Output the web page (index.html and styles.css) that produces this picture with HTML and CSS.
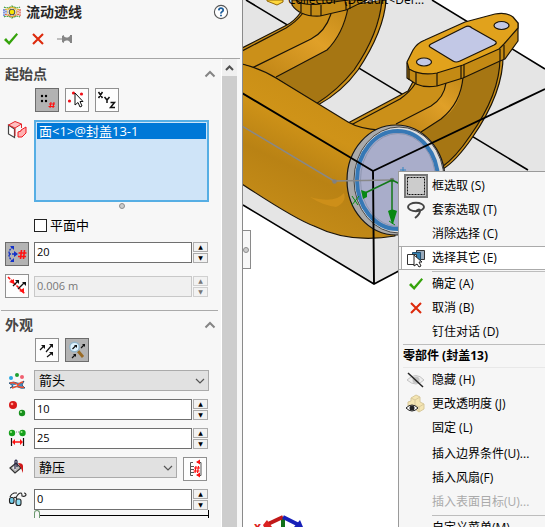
FILE: index.html
```html
<!DOCTYPE html>
<html lang="zh-CN">
<head>
<meta charset="utf-8">
<title>流动迹线</title>
<link rel="stylesheet" href="styles.css">
</head>
<body>
<main class="app">
  <form class="panel">
    <header class="panel-head">
      <div class="title-row">
        <svg class="title-icon" width="18" height="16" viewBox="0 0 18 16" fill="none" stroke-width="1.1" stroke-dasharray="2 .6">
          <path d="M1 3q3 2 8-1q5 3 8 1" stroke="#3f9a35"/><path d="M2 5.500q3 0 7-2.500q4 2.500 7 2.500" stroke="#e0b020"/>
          <path d="M1 13q3-2 8 1q5-3 8-1" stroke="#3f9a35"/><path d="M2 10.500q3 0 7 2.500q4-2.500 7-2.500" stroke="#e06030"/>
          <path d="M1 5v7M3 6.500v3" stroke="#2448c8"/><path d="M17 5v7M15 6.500v3" stroke="#d83a2a"/>
          <circle cx="9" cy="8" r="4.600" stroke="#e0b020" stroke-width=".9"/>
          <circle cx="9" cy="8" r="2.800" fill="#f7e500" stroke="#555" stroke-dasharray="none"/>
        </svg>
        <h1>流动迹线</h1>
        <button type="button" class="plain help" aria-label="帮助">
          <svg width="16" height="16" viewBox="0 0 16 16" fill="none"><circle cx="8" cy="8" r="6.600" fill="#fff" stroke="#555" stroke-width="1.100"/><path d="M5.800 6.300Q6 4.200 8 4.200T10.200 6Q10.200 7 9 7.700T8 9.600M8 10.700v1.600" stroke="#1f5f9c" stroke-width="1.800"/></svg>
        </button>
      </div>
      <div class="action-row">
        <button type="button" class="plain" aria-label="确定"><svg width="16" height="14" viewBox="0 0 16 14"><path d="M1 8L3 6l3 3.500L13.500 1 15 2.500 6.200 13z" fill="#35a30b"/></svg></button>
        <button type="button" class="plain" aria-label="取消"><svg width="12" height="12" viewBox="0 0 12 12"><path d="M1 1l10 10M11 1L1 11" stroke="#dd2a0c" stroke-width="2.100"/></svg></button>
        <button type="button" class="plain" aria-label="保持可见"><svg width="16" height="12" viewBox="0 0 16 12"><path d="M0 5.500h5V3l2-1v1.500l2 1h2L13 3V2h2v8h-2V9l-2-1.500H9l-2 1V10L5 9V6.500H0z" fill="#858585"/></svg></button>
      </div>
    </header>

    <div class="panel-body">
      <div class="sections">
        <section class="section">
          <h2>起始点
            <svg class="collapse" width="12" height="8" viewBox="0 0 12 8"><path d="M1.500 6.500L6 2l4.500 4.500" fill="none" stroke="#858585" stroke-width="2"/></svg>
          </h2>
          <div class="tools">
            <button type="button" class="tool on" aria-label="阵列"><svg width="22" height="22" viewBox="0 0 22 22"><g fill="#000"><circle cx="6" cy="7" r="1.200"/><circle cx="10" cy="7" r="1.200"/><circle cx="6" cy="12" r="1.200"/><circle cx="10" cy="12" r="1.200"/></g><path d="M15 13l-1 6M18 13l-1 6M13 15h6M12.500 17.500h6" stroke="#f11" stroke-width="1.100"/></svg></button>
            <button type="button" class="tool" aria-label="选取点"><svg width="22" height="22" viewBox="0 0 22 22"><g fill="#f01018"><circle cx="7.500" cy="4" r="1.600"/><circle cx="15.500" cy="5" r="1.600"/><circle cx="3.500" cy="12" r="1.600"/></g><path d="M9 4v12l3-2.500 2 4.500 2-1-2-4.500h3z" fill="#fff" stroke="#111"/></svg></button>
            <button type="button" class="tool" aria-label="坐标"><svg width="22" height="22" viewBox="0 0 22 22" fill="none" stroke="#111" stroke-width="1.500"><path d="M2.500 3l4 6M6.500 3l-4 6M8.500 8l2.500 3 2.500-3M11 11v3M14.500 13.500h4l-4 5h4.500"/></svg></button>
          </div>
          <div class="field">
            <svg class="icon" width="20" height="20" viewBox="0 0 20 20"><path d="M1.500 5v9l6 3.500V9z" fill="#fff" stroke="#444" stroke-width="1.200"/><path d="M1.500 5L8 1.500 14.500 4 8 8z" fill="#ffc0c0" stroke="#e5252a"/><path d="M8 8v8M14.500 4v4" stroke="#e5252a"/><path d="M11 12l3-1v-1l5-3v6l-4 4h-4z" fill="#ffb0b0" stroke="#f01820"/></svg>
            <div class="picker">
              <ul class="listbox" role="listbox" aria-label="参考"><li role="option" aria-selected="true">面&lt;1&gt;@封盖13-1</li></ul>
              <span class="grip"></span>
            </div>
          </div>
          <label class="check"><input type="checkbox">平面中</label>
          <div class="field">
            <button type="button" class="tool on" aria-label="点数"><svg width="22" height="22" viewBox="0 0 22 22"><path d="M7 4q-4 2-4 7t4 7M3 11h6" fill="none" stroke="#1432c8" stroke-width="1.400" stroke-dasharray="2 1"/><path d="M4 3h4v4zM8 8l4 3-4 3zM8 15v4H4z" fill="#1432c8"/><path d="M15.500 7l-1 9M18.500 7l-1 9M12.500 10h8M12 13.500h8" stroke="#f11" stroke-width="1.600"/></svg></button>
            <div class="spin"><input type="text" value="20" aria-label="点数"><div class="steps"><button type="button" aria-label="增加">▲</button><button type="button" aria-label="减少">▼</button></div></div>
          </div>
          <div class="field center">
            <button type="button" class="tool" aria-label="间距"><svg width="22" height="22" viewBox="0 0 22 22"><path d="M2 2l17 17" stroke="#f11" stroke-width="1.500" stroke-dasharray="3 1"/><path d="M3 7l5-3v5zM13 16l5-3v5z" fill="#f11"/><path d="M7 11l5-5M12 14l6-6" stroke="#111" stroke-width="1.300"/><path d="M9 5h4v4zM16 7h4v4z" fill="#111"/></svg></button>
            <div class="spin disabled"><input type="text" value="0.006 m" disabled aria-label="间距"><div class="steps"><button type="button" disabled aria-label="增加">▲</button><button type="button" disabled aria-label="减少">▼</button></div></div>
          </div>
        </section>

        <section class="section">
          <h2>外观
            <svg class="collapse" width="12" height="8" viewBox="0 0 12 8"><path d="M1.500 6.500L6 2l4.500 4.500" fill="none" stroke="#858585" stroke-width="2"/></svg>
          </h2>
          <div class="tools">
            <button type="button" class="tool" aria-label="静态迹线"><svg width="22" height="22" viewBox="0 0 22 22"><path d="M4 11l4-4M10 13l6-7M11 18l5-4" stroke="#111" stroke-width="1.200"/><path d="M5 6h4v4zM13 5h4v4zM13 13h4v4z" fill="#111"/></svg></button>
            <button type="button" class="tool on" aria-label="动态迹线"><svg width="22" height="22" viewBox="0 0 22 22"><path d="M12 12l5 6" stroke="#9a6b25" stroke-width="2.800"/><circle cx="8.500" cy="8" r="4.800" fill="#dff3ff" stroke="#92b4c8" stroke-width="1.400"/><path d="M6.500 10l3-3M15 9l3-3M6 19l3-3" stroke="#111" stroke-width="1.200"/><path d="M8 6h3v3zM16 5h3v3zM7 15h3v3z" fill="#111"/></svg></button>
          </div>
          <div class="field center">
            <svg class="icon" width="20" height="20" viewBox="0 0 20 20"><circle cx="4" cy="7" r="2" fill="#28a8e0"/><circle cx="10" cy="4" r="2" fill="#20a030"/><circle cx="15" cy="6" r="2" fill="#f06070"/><path d="M2 12q5-2 8 0t7-2l-2 4 3 3q-4 1-7-1t-8 1l3-2z" fill="#3f91cc" stroke="#204870" stroke-width=".8"/><path d="M3 12q6-1 7 2t7 2M5 17q5-1 6-3t5-3" stroke="#f05030" stroke-width="1.500" fill="none"/><path d="M6 15l4-1" stroke="#fff" stroke-width="1.200"/></svg>
            <div class="combo"><select aria-label="迹线形式"><option>箭头</option></select><svg class="caret" width="10" height="6" viewBox="0 0 10 6"><path d="M1 1l4 4 4-4" fill="none" stroke="#555" stroke-width="1.200"/></svg></div>
          </div>
          <div class="field">
            <svg class="icon" width="20" height="20" viewBox="0 0 20 20"><circle cx="6" cy="6" r="4" fill="#d91818"/><circle cx="5" cy="5" r="1.300" fill="#ff9b90"/><circle cx="15" cy="14" r="3.200" fill="#16901c"/><circle cx="14" cy="13" r="1" fill="#b0f0a0"/></svg>
            <div class="spin"><input type="text" value="10" aria-label="宽度"><div class="steps"><button type="button" aria-label="增加">▲</button><button type="button" aria-label="减少">▼</button></div></div>
          </div>
          <div class="field">
            <svg class="icon" width="20" height="20" viewBox="0 0 20 20"><circle cx="5" cy="5" r="3.200" fill="#16a01c"/><circle cx="15.500" cy="5" r="3.200" fill="#16a01c"/><circle cx="4" cy="4" r="1" fill="#a8f090"/><circle cx="14.500" cy="4" r="1" fill="#a8f090"/><path d="M9 4h3" stroke="#888" stroke-dasharray="1 1"/><path d="M4.500 10v8M16.500 10v8" stroke="#111" stroke-width="1.200"/><path d="M6 14h9" stroke="#f11" stroke-width="1.500"/><path d="M5 14l3-3v6zM16 14l-3-3v6z" fill="#f11"/></svg>
            <div class="spin"><input type="text" value="25" aria-label="间隔"><div class="steps"><button type="button" aria-label="增加">▲</button><button type="button" aria-label="减少">▼</button></div></div>
          </div>
          <div class="field">
            <svg class="icon" width="20" height="20" viewBox="0 0 20 20"><path d="M3 11l6-5 5 5-6 5z" fill="#bbb" stroke="#333" stroke-width="1.200"/><path d="M5 11l4-3v5z" fill="#eee"/><path d="M8 12V4q1-2 2 0v6" fill="none" stroke="#224" stroke-width="1.200"/><path d="M11 6q5 0 5 3v7q-1-2-2-5z" fill="#cf1818"/></svg>
            <div class="combo"><select aria-label="颜色依据"><option>静压</option></select><svg class="caret" width="10" height="6" viewBox="0 0 10 6"><path d="M1 1l4 4 4-4" fill="none" stroke="#555" stroke-width="1.200"/></svg></div>
            <button type="button" class="tool range-tool" aria-label="调整最小/最大值"><svg width="22" height="22" viewBox="0 0 22 22"><path d="M9 4.500H6.500v13H9M7 8.500h3M7 11.500h3M7 14.500h3M13 4.500h4v13h-4" fill="none" stroke="#555"/><path d="M12 8l-1 7M14.500 8l-1 7M10 10h6M9.500 13h6" stroke="#f11" stroke-width="1.200"/><path d="M12 4l4-2.500v5zM12 17l4-2.500v5z" fill="#f11"/></svg></button>
          </div>
          <div class="field">
            <svg class="icon" width="20" height="20" viewBox="0 0 20 20" fill="none" stroke="#222" stroke-width="1.100"><path d="M3 8q1-3 4-4l3 0M9 9q2-5 5-5q1 0 1 3q3 1 4-1q0-2-2-2M7 9q1-2 3 1"/><rect x="2.500" y="8.500" width="4.500" height="6" rx="2" fill="#72cbe8"/><rect x="9" y="10" width="5" height="6.500" rx="2" fill="#8fdcf2"/></svg>
            <div class="picker">
              <div class="spin"><input type="text" value="0" aria-label="透明度"><div class="steps"><button type="button" aria-label="增加">▲</button><button type="button" aria-label="减少">▼</button></div></div>
              <input class="slider" type="range" min="0" max="100" value="0" aria-label="透明度滑块">
            </div>
          </div>
        </section>
      </div>
      <div class="scroll"><svg class="scroll-up" width="15" height="17" viewBox="0 0 15 17"><path d="M4 11l3.500-3.500L11 11" fill="none" stroke="#505050" stroke-width="2"/></svg></div>
    </div>
  </form>

  <div class="viewport">
    <svg class="scene" viewBox="243 0 302 527" preserveAspectRatio="xMinYMin slice">
      <defs>
        <linearGradient id="body" gradientUnits="userSpaceOnUse" x1="330" y1="90" x2="270" y2="215"><stop offset="0" stop-color="#c98e16"/><stop offset=".3" stop-color="#cf9318"/><stop offset=".62" stop-color="#b98214"/><stop offset="1" stop-color="#c58c18"/></linearGradient>
        <linearGradient id="tube" x1="0" y1="1" x2="1" y2="0"><stop offset="0" stop-color="#bd8314"/><stop offset=".6" stop-color="#e0a028"/><stop offset="1" stop-color="#c48a18"/></linearGradient>
      </defs>
      <path d="M242 0H432L545 69V194L374 284 242 205z" fill="#e5e5e5"/>
      <g stroke="#000" stroke-width="1.600" fill="none"><path d="M246 0L528 170M432 0L545 69M243 205L374 284 545 194"/></g>

      <g stroke="#1b1408" stroke-width="1.200" stroke-linejoin="round">
        <path d="M242 48L285 26Q294 22 301 12L386 0Q384 31 358 70Q342 92 318 105L276 78 242 64z" fill="#cb9019"/>
        <path d="M276 77L327 50Q343 34 348 8L382 0Q378 34 354 70Q338 90 316 104z" fill="#a67613" stroke="none"/>
        <path d="M252 68L311 39Q325 32 331 14L348 9Q343 35 327 50L276 77z" fill="url(#tube)" stroke="none"/>
        <path d="M242 51L286 28Q296 22 303 13M252 68L311 39Q325 32 331 14M276 77L327 50Q343 34 348 8M382 0Q379 34 354 70Q338 90 316 104" fill="none"/>
        <path d="M292 0V5Q300 17 320 16L346 10 367 0z" fill="#c28a16"/>
        <path d="M296 0Q303 6 320 4L348 0M301 3v9M311 5v11M321 5v11M346 2v8M350 1v8" fill="none"/>

        <path d="M348 123L408 91 416 76 503 54Q504 92 472 138Q456 161 443 169L395 180 350 130z" fill="#cb9019"/>
        <path d="M421 132L441 119Q461 103 463 77L500 58Q500 94 470 136Q456 157 442 167Q438 145 421 132z" fill="#a67613" stroke="none"/>
        <path d="M396 124L431 106Q444 98 446 83L463 78Q461 108 441 119L420 132z" fill="url(#tube)" stroke="none"/>
        <path d="M351 125L400 99Q410 92 415 84M396 124L431 106Q444 98 446 83M421 132L441 119Q461 103 463 77M500 58Q500 94 470 136Q456 157 442 167" fill="none"/>
        <path d="M407 63V78L416 84Q425 88 437 86L463 78 500 61 505 59 518 41V23z" fill="#c48a14"/>
        <path d="M407 62L413 50Q417 43 425 40L465 22 495 14Q507 12 513 17L518 23V28L504 44 499 49 463 65 437 73Q421 76 409 69z" fill="#e1a21c"/>
        <path d="M409 69v11M416 72v12M437 73v13M461 66v13M464 65v13M500 49v12M504 45v14" fill="none"/>
        <path d="M431 44L465 27Q469 25 472 28L495 41Q498 43 494 45L460 61Q456 63 453 61L430 47Q428 46 431 44z" fill="#c2c8e6"/>
        <ellipse cx="424" cy="62" rx="7.500" ry="4" fill="#c2c8e6"/><ellipse cx="501.500" cy="25.500" rx="7.500" ry="4" fill="#c2c8e6"/>

        <path d="M242 64Q262 69 276 78L348 122Q360 129 380 130L395 236Q350 244 314 226Q295 219 242 184z" fill="url(#body)"/>
      </g>
      <path d="M310 197Q335 204 344 193Q347 202 336 207Q322 205 310 197z" fill="#cd8f19"/>
      <ellipse cx="396" cy="180" rx="49" ry="55" fill="#aaa" stroke="#181818" stroke-width="1.200"/>
      <ellipse cx="399" cy="180" rx="45" ry="53" fill="#ddd" stroke="#222" stroke-width=".8"/>
      <ellipse cx="397.500" cy="180" rx="40.500" ry="49" fill="#a9adca" stroke="#3678b5" stroke-width="4"/>
      <ellipse cx="398" cy="180" rx="37.500" ry="46.500" fill="none" stroke="#858ea8" stroke-width=".8"/>
      <path d="M242 93L373 171 545 89M373 171L374 284" fill="none" stroke="#000" stroke-width="1.900"/>
      <g fill="none" stroke="#888" stroke-width="1.500"><path d="M242 126L334 181 392 180"/></g>
      <circle cx="334.500" cy="181.500" r="2.300" fill="#808080"/><circle cx="392" cy="180" r="2.300" fill="#777"/>
      <path d="M392 180L365 193M392 180V215M392 180L402 185" stroke="#127818" stroke-width="1.500"/>
      <path d="M361 190l6 2 0 5-4 2zM388 211q4-3 9 0l-4 13h-1z" fill="#078812"/><path d="M352 196l6 9M359 196l-7 9M389 221l6 4" stroke="#078812"/>
      <path d="M400 170h6M403 167v6" stroke="#3182c0"/>
      <path d="M283 517V527" stroke="#117018" stroke-width="4"/><path d="M283 517L268 524" stroke="#c01818" stroke-width="4"/><path d="M283 517L299 525" stroke="#1720b8" stroke-width="4"/>
      <path d="M263 525l4-5 5 7h-8z" fill="#db2222"/><path d="M303 527l-3-7-6 7z" fill="#1720b8"/>
      <text x="254" y="531" class="axis">x</text>
      <path d="M267 0h16v2l-6 3-10-4z" fill="#ffd83d" stroke="#94690a"/>
      <text x="288" y="4" class="tree">Collector  (Default&lt;Def...</text>
    </svg>
    <button type="button" class="splitter" aria-label="折叠面板"><span class="grip"></span></button>

    <nav class="menu" aria-label="快捷菜单">
      <button type="button"><span class="mi"><svg width="24" height="24" viewBox="0 0 24 24"><rect x="1" y="1" width="22" height="22" fill="#c9c9c9" stroke="#777" stroke-width="2"/><rect x="3.500" y="3.500" width="17" height="17" fill="#ccc" stroke="#111" stroke-dasharray="2 1"/></svg></span>框选取 (S)</button>
      <button type="button"><span class="mi"><svg width="20" height="20" viewBox="0 0 20 20" fill="none" stroke="#444" stroke-width="1.900"><ellipse cx="10" cy="7" rx="8" ry="4.200"/><path d="M10 11q4-3 4 0t-5 7"/></svg></span>套索选取 (T)</button>
      <button type="button"><span class="mi"></span>消除选择 (C)</button>
      <button type="button" class="active"><span class="mi"><svg width="20" height="20" viewBox="0 0 20 20"><path d="M10.500 2.500h8v9h-8z" fill="#9ab" stroke="#333"/><path d="M6.500 4.500h8v9h-8z" fill="#3280b0" stroke="#245070"/><path d="M1.500 6.500h9v10h-9z" fill="#fff" stroke="#333"/><path d="M8 7v11l3-2 2 3 2-1-2-4h3z" fill="#fff" stroke="#222"/></svg></span>选择其它 (E)</button>
      <hr class="inset">
      <button type="button"><span class="mi"><svg width="16" height="14" viewBox="0 0 16 14"><path d="M1 8L3 6l3 3.500L13.500 1 15 2.500 6.200 13z" fill="#35a30b"/></svg></span>确定 (A)</button>
      <button type="button"><span class="mi"><svg width="12" height="12" viewBox="0 0 12 12"><path d="M1 1l10 10M11 1L1 11" stroke="#dd2a0c" stroke-width="2.100"/></svg></span>取消 (B)</button>
      <button type="button"><span class="mi"></span>钉住对话 (D)</button>
      <h3>零部件 (封盖13)</h3>
      <button type="button"><span class="mi"><svg width="20" height="18" viewBox="0 0 20 18"><path d="M1 9q9-9 17 0q-8 8-17 0z" fill="#eee" stroke="#c4c4c4"/><circle cx="10" cy="9" r="3.500" fill="#c4c4c4"/><path d="M2 2l15 14" stroke="#222" stroke-width="1.500"/></svg></span>隐藏 (H)</button>
      <button type="button"><span class="mi"><svg width="20" height="20" viewBox="0 0 20 20"><path d="M5 4l5-3 4 2v5l4 2v5l-5 3-4-3-7-3V8l3-1z" fill="#f4e5b2" stroke="#d8c99c"/><path d="M5 4l4 2 5-3M9 6v5l4 2 5-3M13 13v5" stroke="#d8c99c" fill="none"/><path d="M0 14q6-6 12 0q-6 6-12 0z" fill="#fff" stroke="#222"/><circle cx="6" cy="14" r="2.500" fill="#222"/></svg></span>更改透明度 (J)</button>
      <button type="button"><span class="mi"></span>固定 (L)</button>
      <div class="group">
        <button type="button"><span class="mi"></span>插入边界条件(U)...</button>
        <button type="button"><span class="mi"></span>插入风扇(F)</button>
        <button type="button" disabled><span class="mi"></span>插入表面目标(U)...</button>
      </div>
      <hr class="inset">
      <button type="button"><span class="mi"></span>自定义菜单(M)</button>
    </nav>
  </div>
</main>
</body>
</html>
```

FILE: styles.css
```css
* { box-sizing: border-box; }
body {
  margin: 0;
  background: #fff;
  color: #000;
  font: 12px/16px "Open Sans", "Noto Sans CJK SC", sans-serif;
}
svg { display: block; flex: none; }
button, input, select { font: inherit; color: inherit; margin: 0; }
h1, h2, h3, ul { margin: 0; padding: 0; }

.app {
  display: grid;
  grid-template-columns: 242px 1fr;
  height: 100vh;
  overflow: hidden;
}

/* Property panel */
.panel {
  display: flex;
  flex-direction: column;
  min-height: 0;
  background: #f7f7f7;
}
.panel-head {
  margin-right: 2px;
  border-bottom: 1px solid #a5a5a5;
}
.title-row {
  display: flex;
  align-items: center;
  height: 24px;
  padding: 0 11px 0 3px;
}
h1 {
  flex: 1;
  margin-left: 5px;
  font-size: 14px;
  line-height: 24px;
  color: #262626;
}
.plain {
  padding: 0;
  border: 0;
  background: none;
}
.action-row {
  display: flex;
  align-items: center;
  gap: 13px;
  height: 34px;
  padding: 0 3px 4px;
}
.panel-body {
  display: flex;
  flex: 1;
  min-height: 0;
  margin-right: 5px;
}
.sections {
  flex: 1;
  min-width: 0;
  overflow: hidden;
}
.section { padding: 0 12px 4px 5px; }
.section + .section::before {
  content: "";
  display: block;
  height: 1px;
  margin: 0 -9px 0 -4px;
  background: #aaa;
}
h2 {
  display: flex;
  justify-content: space-between;
  align-items: center;
  height: 29px;
  margin-right: -7px;
  font-size: 14px;
  line-height: 28px;
  color: #454545;
}
.section + .section h2 { height: 27px; }
.tools {
  display: flex;
  gap: 6px;
  margin: 0 0 8px 30px;
}
.tool {
  flex: none;
  width: 24px;
  height: 24px;
  padding: 0;
  border: 1px solid #909090;
  background: #fdfdfd;
}
.tool.on {
  border-color: #6c6c6c;
  background: #b3b3b3;
}
.field {
  display: flex;
  gap: 5px;
  align-items: flex-start;
  margin-bottom: 8px;
}
.field.center { align-items: center; }
.icon { margin: 0 2px; }
.range-tool { margin: 0 2px 0 1px; }
.picker {
  display: flex;
  flex: 1;
  flex-direction: column;
  min-width: 0;
}
.listbox {
  height: 82px;
  padding: 1px;
  border: 2px solid #56aee4;
  background: #cfe4f8;
  list-style: none;
  font-size: 13px;
}
.listbox li {
  padding-left: 2px;
  background: #0078d7;
  color: #fff;
}
.grip {
  width: 6px;
  height: 6px;
  border: 1px solid #8d8d8d;
  border-radius: 50%;
  background: #ccc;
}
.picker .grip {
  align-self: center;
  margin-top: 1px;
}
.check {
  display: flex;
  align-items: center;
  gap: 3px;
  height: 16px;
  margin: 0 0 9px 29px;
  font-size: 13px;
}
.check input {
  appearance: none;
  width: 13px;
  height: 13px;
  border: 1px solid #222;
  background: #fff;
}
.spin {
  display: grid;
  flex: 1 0 auto;
  grid-template-columns: 1fr 15px;
  gap: 1px;
  height: 21px;
  margin-right: 1px;
}
.spin input {
  width: 100%;
  min-width: 0;
  height: 21px;
  padding: 0 2px 2px;
  border: 1px solid #6f6f6f;
  border-radius: 0;
  background: #fff;
  font-size: 11px;
}
.field > .spin { flex: 1 1 0; min-width: 0; }
.spin input:disabled {
  border-color: #c8c8c8;
  background: #f0f0f0;
  color: #777;
}
.steps {
  display: grid;
  grid-template-rows: 1fr 1fr;
  gap: 1px;
}
.steps button {
  display: grid;
  place-items: center;
  padding: 0;
  border: 1px solid #ababab;
  background: #f2f2f2;
  font: 6px/6px "DejaVu Sans", sans-serif;
}
.steps button:disabled {
  border-color: #d0d0d0;
  color: #777;
}
.combo {
  display: grid;
  flex: 1;
  align-items: center;
}
.combo > * { grid-area: 1 / 1; }
.combo select {
  appearance: none;
  width: 100%;
  height: 21px;
  padding: 0 4px 1px;
  border: 1px solid #aaa;
  border-radius: 0;
  background: #e1e1e1;
  font-size: 13px;
}
.caret {
  justify-self: end;
  margin-right: 4px;
  pointer-events: none;
}
.slider {
  appearance: none;
  width: 100%;
  height: 8px;
  border-right: 1px solid #000;
  background: linear-gradient(#000, #000) 4px 5px / 100% 1px no-repeat;
}
.slider::-webkit-slider-thumb {
  appearance: none;
  width: 6px;
  height: 8px;
  border: 1px solid #6d9870;
  border-bottom: 0;
  border-radius: 3px 3px 0 0;
  background: #f7f7f7;
}
.scroll {
  width: 16px;
  border-left: 1px solid #fff;
  background: #cdcdcd;
}
.scroll-up { background: #f0f0f0; }

/* Graphics area */
.viewport {
  position: relative;
  overflow: hidden;
  border-left: 1px solid #8a8a8a;
}
.scene {
  width: 100%;
  height: 100%;
}
.tree { font: 12px "Open Sans", sans-serif; white-space: pre; }
.axis { font: bold 12px "Open Sans", sans-serif; fill: #d22; }
.splitter {
  position: absolute;
  top: 230px;
  left: -1px;
  display: grid;
  place-items: center;
  width: 9px;
  height: 39px;
  padding: 0;
  border: 1px solid #8a8a8a;
  border-left: 0;
  background: #f7f7f7;
}

/* Shortcut menu */
.menu {
  position: absolute;
  top: 171px;
  left: 155px;
  right: 0;
  padding-top: 2px;
  border: 1px solid #9a9a9a;
  border-right: 0;
  background: #f6f6f6;
}
.menu button {
  display: flex;
  align-items: center;
  width: 100%;
  height: 24px;
  padding: 0;
  border: 0;
  background: none;
  white-space: nowrap;
}
.mi {
  display: grid;
  flex: none;
  place-items: center;
  width: 33px;
}
.menu .active {
  box-shadow: inset 2px 0 #f6f6f6, inset 3px 0 #aaa;
  border: solid #aaa;
  border-width: 1px 0;
  background: #fff;
}
.menu button:disabled { color: #aaa; }
.menu hr {
  height: 1px;
  margin: 1px 0 0 33px;
  border: 0;
  background: #bdbdbd;
}
.menu h3 {
  height: 24px;
  margin-left: 4px;
  border-top: 1px solid #bdbdbd;
  border-bottom: 1px solid #e8e8e8;
  font-size: 12px;
  line-height: 22px;
}
.group { padding-top: 2px; }
```
